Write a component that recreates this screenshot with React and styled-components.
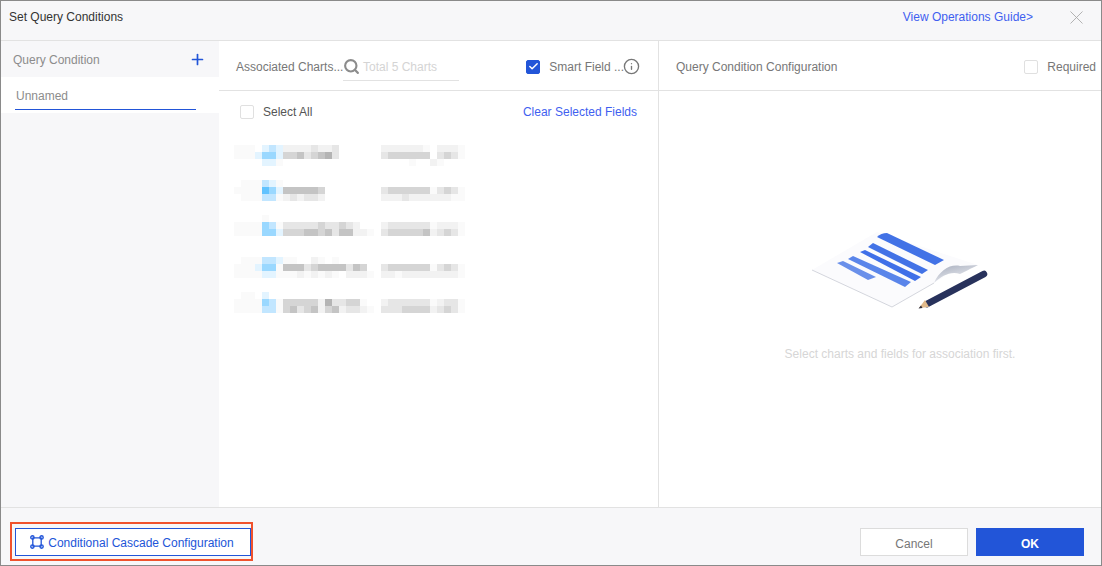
import styled, { createGlobalStyle } from 'styled-components';
import { Plus, Search, Info, X, Check } from 'lucide-react';

const GlobalStyle = createGlobalStyle`
  html, body {
    margin: 0;
    padding: 0;
    background: #fff;
  }
  * {
    box-sizing: border-box;
  }
  body {
    font-family: "Liberation Sans", Arial, sans-serif;
    font-size: 12px;
    color: #666;
  }
`;

// blurred chart list: one string per 7px line, one char per 7px cell
const MOSAIC_COLORS = {
  1: '#fafafa',
  2: '#f2f2f2',
  3: '#e6e6e6',
  4: '#d5d5d5',
  5: '#c4c4c4',
  6: '#b4b4b4',
  a: '#e3f4ff',
  b: '#c2e6ff',
  c: '#9ad8ff',
  d: '#62c3ff',
};

const MOSAIC = [
  '1110aba22223223000000222222102221',
  '111acca44534563000000344444403431',
  '0000aa100000000000000000010021000',
  '',
  '',
  '0111ba1',
  '1111dca55555400000000344444413431',
  '0111bb123233200000000222322222211',
  '',
  '',
  '00001',
  '1111cb133333433432000233333312221',
  '1111cca44455453552210344444523431',
  '',
  '',
  '',
  '0111bba110021010000000000000000',
  '111acc155534555535400344444413431',
  '1111aa111212121022210221222222221',
  '',
  '',
  '0110a',
  '1111cb144444263344100233333312331',
  '1111bb145345245233210333444423431',
];

const Mosaic = () => (
  <MosaicSvg width="231" height="168" viewBox="0 0 231 168">
    {MOSAIC.flatMap((line, y) =>
      line.split('').map((ch, x) =>
        MOSAIC_COLORS[ch] ? (
          <rect key={`${x}-${y}`} x={x * 7} y={y * 7} width="7" height="7" fill={MOSAIC_COLORS[ch]} />
        ) : null
      )
    )}
  </MosaicSvg>
);

const CascadeIcon = () => (
  <svg width="14" height="14" viewBox="0 0 15 15" fill="none" stroke="#2255d8" strokeWidth="1.4">
    <path d="M3 3h9M3 12h9M3 3v9M12 3v9" />
    <circle cx="2.6" cy="2.6" r="1.8" fill="#2255d8" fillOpacity="0.25" />
    <circle cx="12.4" cy="2.6" r="1.8" fill="#2255d8" fillOpacity="0.25" />
    <circle cx="2.6" cy="12.4" r="1.8" fill="#2255d8" fillOpacity="0.25" />
    <circle cx="12.4" cy="12.4" r="1.8" fill="#2255d8" fillOpacity="0.25" />
  </svg>
);

const EmptyIllustration = () => (
  <svg width="200" height="100" viewBox="0 0 200 100">
    <defs>
      <linearGradient id="curl" x1="0" y1="0" x2="0.6" y2="1">
        <stop offset="0" stopColor="#a4abbb" />
        <stop offset="1" stopColor="#f1f2f6" />
      </linearGradient>
    </defs>
    <path d="M12 50 L77 12 L144 34 L178 45 C160 47 150 50 142 58 L92 87 Z" fill="#fbfbfd" />
    <path d="M12 50 L92 87 L134 63" fill="none" stroke="#c9ccd4" strokeWidth="0.8" />
    <path d="M134 63 C140 50 150 44 160 46 L178 45 C170 49 166 51 160 54 C150 51 142 56 134 63 Z" fill="url(#curl)" />
    <path d="M77 17 Q81 13 87 13 L144 40 L135 45 Z" fill="#4272e6" />
    <path d="M68 27 L73 23 L128 50 L122 54 Z" fill="#4272e6" />
    <path d="M60 32 L65 30 L121 57 L115 61 Z" fill="#3f6fe8" />
    <path d="M48 39 L53 36 L111 62 L105 67 Z" fill="#5a85ea" />
    <path d="M37 43 L43 41 L76 57 L68 60 Z" fill="#6a90ea" />
    <path d="M127 84 L184 54" stroke="#28325c" strokeWidth="6.5" strokeLinecap="round" />
    <path d="M119 88 L125 80 L129 87 Z" fill="#e0b98a" />
    <path d="M118.5 88.5 L121 85.5 L122.5 88 Z" fill="#2c2c3a" />
  </svg>
);

export default function App() {
  return (
    <>
      <GlobalStyle />
      <Dialog>
        <Header>
          <DialogTitle>Set Query Conditions</DialogTitle>
          <GuideLink>View Operations Guide&gt;</GuideLink>
          <CloseButton>
            <X size={23} strokeWidth={0.9} />
          </CloseButton>
        </Header>

        <Body>
          <ConditionPanel>
            <ConditionHead>
              <span>Query Condition</span>
              <Plus size={17} color="#2255d8" strokeWidth={2.4} />
            </ConditionHead>
            <ConditionRow>
              <ConditionInput>Unnamed</ConditionInput>
            </ConditionRow>
          </ConditionPanel>

          <ChartsPanel>
            <PanelHead>
              <ChartsLabel>Associated Charts...</ChartsLabel>
              <SearchBox>
                <Search size={17} color="#8c8c8c" strokeWidth={3} />
                <span>Total 5 Charts</span>
              </SearchBox>
              <SmartField>
                <Checkbox $checked>
                  <Check size={11} color="#fff" strokeWidth={3.2} />
                </Checkbox>
                <span>Smart Field ...</span>
                <Info size={17} color="#777" strokeWidth={1.9} />
              </SmartField>
            </PanelHead>
            <SelectBar>
              <Checkbox />
              <SelectLabel>Select All</SelectLabel>
              <BlueLink>Clear Selected Fields</BlueLink>
            </SelectBar>
            <Mosaic />
          </ChartsPanel>

          <ConfigPanel>
            <ConfigHead>
              <span>Query Condition Configuration</span>
              <RequiredBox>
                <Checkbox />
                <span>Required</span>
              </RequiredBox>
            </ConfigHead>
            <EmptyState>
              <EmptyIllustration />
              <EmptyText>Select charts and fields for association first.</EmptyText>
            </EmptyState>
          </ConfigPanel>
        </Body>

        <Footer>
          <Highlight>
            <CascadeButton>
              <CascadeIcon />
              Conditional Cascade Configuration
            </CascadeButton>
          </Highlight>
          <Actions>
            <CancelButton>Cancel</CancelButton>
            <OkButton>OK</OkButton>
          </Actions>
        </Footer>
      </Dialog>
    </>
  );
}

const Dialog = styled.div`
  width: 1102px;
  height: 566px;
  border: 1px solid #8a8a8a;
  display: flex;
  flex-direction: column;
  overflow: hidden;
  background: #fff;
`;

const Header = styled.header`
  height: 40px;
  flex: none;
  display: flex;
  align-items: center;
  padding: 0 13px 8px 8px;
  background: #f7f7f9;
  border-bottom: 1px solid #e2e2e2;
`;

const DialogTitle = styled.div`
  color: #333;
  flex: 1;
`;

const GuideLink = styled.a`
  color: #3f5ff0;
`;

const CloseButton = styled.div`
  display: flex;
  color: #a8a8a8;
  margin-left: 32px;
  margin-top: 2px;
  width: 23px;
  justify-content: center;
`;

const Body = styled.div`
  flex: 1;
  display: flex;
  min-height: 0;
`;

const ConditionPanel = styled.aside`
  width: 218px;
  flex: none;
  background: #f7f7f9;
`;

const ConditionHead = styled.div`
  height: 36px;
  display: flex;
  align-items: center;
  justify-content: space-between;
  padding: 0 13px 0 12px;
  color: #8c8c8c;

  span {
    padding-top: 2px;
  }
`;

const ConditionRow = styled.div`
  height: 36px;
  background: #fff;
  padding: 0 23px 0 14px;
`;

const ConditionInput = styled.div`
  height: 33px;
  line-height: 39px;
  padding-left: 1px;
  color: #8c8c8c;
  border-bottom: 1px solid #2255d8;
`;

const ChartsPanel = styled.section`
  width: 440px;
  flex: none;
  border-right: 1px solid #e2e2e2;
`;

const PanelHead = styled.div`
  height: 50px;
  display: flex;
  align-items: center;
  padding: 0 18px 0 17px;
  border-bottom: 1px solid #e2e2e2;
`;

const ChartsLabel = styled.span`
  width: 107px;
  flex: none;
  padding-top: 2px;
  color: #777;
  white-space: nowrap;
`;

const SearchBox = styled.div`
  width: 116px;
  height: 28px;
  display: flex;
  align-items: center;
  gap: 3px;
  margin-top: 3px;
  border-bottom: 1px solid #e2e2e2;
  color: #d4d4d4;
`;

const SmartField = styled.div`
  margin-left: auto;
  margin-top: 2px;
  display: flex;
  align-items: center;
  color: #777;
  white-space: nowrap;

  span {
    margin-left: 9px;
    margin-right: -1px;
  }
`;

const Checkbox = styled.div`
  width: 14px;
  height: 14px;
  flex: none;
  display: flex;
  align-items: center;
  justify-content: center;
  border-radius: 2px;
  border: 1px solid ${(p) => (p.$checked ? '#2255d8' : '#e0e0e0')};
  background: ${(p) => (p.$checked ? '#2255d8' : '#fff')};
`;

const SelectBar = styled.div`
  height: 42px;
  display: flex;
  align-items: center;
  padding: 0 21px;
  margin-bottom: 12px;
`;

const SelectLabel = styled.span`
  color: #555;
  margin-left: 9px;
`;

const BlueLink = styled.a`
  margin-left: auto;
  color: #3f5ff0;
`;

const MosaicSvg = styled.svg`
  display: block;
  margin-left: 15px;
`;

const ConfigPanel = styled.section`
  flex: 1;
  min-width: 0;
  display: flex;
  flex-direction: column;
`;

const ConfigHead = styled.div`
  height: 50px;
  flex: none;
  display: flex;
  align-items: center;
  justify-content: space-between;
  padding: 2px 5px 0 17px;
  color: #777;
  border-bottom: 1px solid #e2e2e2;
`;

const RequiredBox = styled.div`
  display: flex;
  align-items: center;
  gap: 9px;
`;

const EmptyState = styled.div`
  display: flex;
  flex-direction: column;
  align-items: center;
  padding: 129px 0 0 40px;
`;

const EmptyText = styled.div`
  margin-top: 27px;
  color: #d6d6d6;
  white-space: nowrap;
`;

const Footer = styled.footer`
  height: 58px;
  flex: none;
  display: flex;
  justify-content: space-between;
  padding: 14px 17px 0 9px;
  background: #f7f7f9;
  border-top: 1px solid #e2e2e2;
`;

const Highlight = styled.div`
  width: 243px;
  height: 39px;
  padding: 4px 0 3px 3px;
  border: 2px solid #f0522d;
`;

const CascadeButton = styled.button`
  width: 236px;
  height: 28px;
  display: flex;
  align-items: center;
  justify-content: center;
  gap: 4px;
  padding: 2px 2px 0 0;
  font: inherit;
  color: #2255d8;
  background: #fff;
  border: 1px solid #2255d8;

  svg {
    margin-top: -2px;
  }
`;

const Actions = styled.div`
  display: flex;
  gap: 8px;
  margin-top: 6px;
`;

const CancelButton = styled.button`
  width: 108px;
  height: 28px;
  padding: 4px 0 0;
  font: inherit;
  color: #777;
  background: #fff;
  border: 1px solid #dcdcdc;
`;

const OkButton = styled.button`
  width: 108px;
  height: 28px;
  padding: 4px 0 0;
  font: inherit;
  font-weight: 700;
  color: #fff;
  background: #2255d8;
  border: none;
`;
